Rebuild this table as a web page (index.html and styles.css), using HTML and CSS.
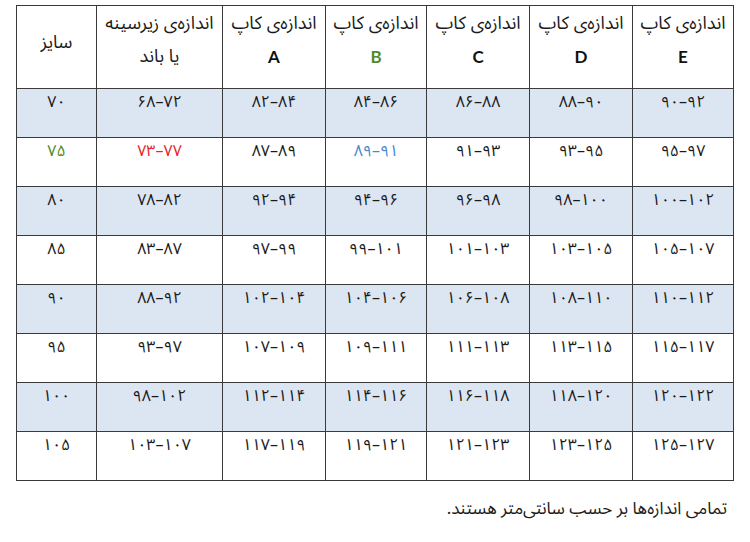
FILE: index.html
```html
<!DOCTYPE html>
<html lang="fa">
<head>
<meta charset="utf-8">
<link rel="stylesheet" href="styles.css">
</head>
<body>
<div class="page">
<table class="sizes">
  <colgroup>
    <col class="c-size">
    <col class="c-band">
    <col class="c-a">
    <col class="c-b">
    <col class="c-c">
    <col class="c-d">
    <col class="c-e">
  </colgroup>
  <thead>
    <tr>
      <th class="single">سایز</th>
      <th>اندازه‌ی زیرسینه<br>یا باند</th>
      <th>اندازه‌ی کاپ<br><span class="lat">A</span></th>
      <th>اندازه‌ی کاپ<br><span class="lat green">B</span></th>
      <th>اندازه‌ی کاپ<br><span class="lat">C</span></th>
      <th>اندازه‌ی کاپ<br><span class="lat">D</span></th>
      <th>اندازه‌ی کاپ<br><span class="lat">E</span></th>
    </tr>
  </thead>
  <tbody>
    <tr class="shade"><td>۷۰</td><td>۶۸–۷۲</td><td>۸۲–۸۴</td><td>۸۴–۸۶</td><td>۸۶–۸۸</td><td>۸۸–۹۰</td><td>۹۰–۹۲</td></tr>
    <tr><td class="green">۷۵</td><td class="red">۷۳–۷۷</td><td>۸۷–۸۹</td><td class="blue">۸۹–۹۱</td><td>۹۱–۹۳</td><td>۹۳–۹۵</td><td>۹۵–۹۷</td></tr>
    <tr class="shade"><td>۸۰</td><td>۷۸–۸۲</td><td>۹۲–۹۴</td><td>۹۴–۹۶</td><td>۹۶–۹۸</td><td>۹۸–۱۰۰</td><td>۱۰۰–۱۰۲</td></tr>
    <tr><td>۸۵</td><td>۸۳–۸۷</td><td>۹۷–۹۹</td><td>۹۹–۱۰۱</td><td>۱۰۱–۱۰۳</td><td>۱۰۳–۱۰۵</td><td>۱۰۵–۱۰۷</td></tr>
    <tr class="shade"><td>۹۰</td><td>۸۸–۹۲</td><td>۱۰۲–۱۰۴</td><td>۱۰۴–۱۰۶</td><td>۱۰۶–۱۰۸</td><td>۱۰۸–۱۱۰</td><td>۱۱۰–۱۱۲</td></tr>
    <tr><td>۹۵</td><td>۹۳–۹۷</td><td>۱۰۷–۱۰۹</td><td>۱۰۹–۱۱۱</td><td>۱۱۱–۱۱۳</td><td>۱۱۳–۱۱۵</td><td>۱۱۵–۱۱۷</td></tr>
    <tr class="shade"><td>۱۰۰</td><td>۹۸–۱۰۲</td><td>۱۱۲–۱۱۴</td><td>۱۱۴–۱۱۶</td><td>۱۱۶–۱۱۸</td><td>۱۱۸–۱۲۰</td><td>۱۲۰–۱۲۲</td></tr>
    <tr><td>۱۰۵</td><td>۱۰۳–۱۰۷</td><td>۱۱۷–۱۱۹</td><td>۱۱۹–۱۲۱</td><td>۱۲۱–۱۲۳</td><td>۱۲۳–۱۲۵</td><td>۱۲۵–۱۲۷</td></tr>
  </tbody>
</table>
<p class="note" dir="rtl">تمامی اندازه‌ها بر حسب سانتی‌متر هستند.</p>
</div>
</body>
</html>
```

FILE: styles.css
```css
html, body {
  margin: 0;
  padding: 0;
  background: #ffffff;
}

body {
  font-family: "Noto Sans Arabic", "Noto Naskh Arabic", "DejaVu Sans", sans-serif;
  color: #1a1a1a;
}

.page {
  padding: 5px 0 0 16px;
  width: 717px;
}

.sizes {
  border-collapse: collapse;
  table-layout: fixed;
  width: 717px;
}

.c-size { width: 80px; }
.c-band { width: 126px; }
.c-a { width: 103px; }
.c-b { width: 101px; }
.c-c { width: 103px; }
.c-d { width: 103px; }
.c-e { width: 101px; }

.sizes th,
.sizes td {
  border: 1.5px solid #3a3a3a;
  text-align: center;
  vertical-align: top;
  padding: 0;
}

.sizes th {
  height: 83px;
  box-sizing: border-box;
  font-weight: normal;
  font-size: 18px;
  line-height: 33px;
  padding-top: 1px;
}

.sizes th.single {
  padding-top: 20px;
}

.lat {
  font-family: Lato, "Liberation Sans", sans-serif;
  font-weight: 700;
  font-size: 17px;
  color: #111;
}

.sizes td {
  height: 49px;
  box-sizing: border-box;
  font-size: 16px;
  line-height: 20px;
  padding-top: 3px;
}

.shade td {
  background: #dce6f2;
}

.green { color: #4f8a2e !important; }
.red { color: #e5262c; }
.blue { color: #4a88c9; }

.note {
  margin: 17px 6px 0 0;
  font-size: 17px;
  line-height: 22px;
  text-align: right;
  color: #1a1a1a;
}
```
